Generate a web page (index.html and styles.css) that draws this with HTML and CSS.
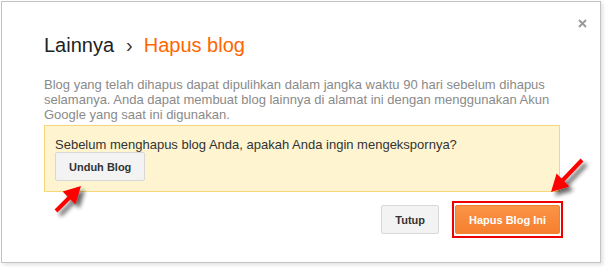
FILE: index.html
```html
<!DOCTYPE html>
<html lang="id">
    <head>
        <meta charset="UTF-8" />
        <meta name="viewport" content="width=device-width, initial-scale=1.0" />
        <title>Hapus blog</title>
        <link rel="stylesheet" href="styles.css">
    </head>
    <body>
        <div class="dialog">
            <button class="close-btn" aria-label="Tutup">
                <svg width="9" height="9" viewBox="0 0 9 9" fill="none" stroke="currentColor" stroke-width="2">
                    <path d="M1 1 8 8"></path>
                    <path d="M8 1 1 8"></path>
                </svg>
            </button>

            <h1 class="dialog-title">
                <span class="crumb">Lainnya</span><span class="sep">›</span><span class="current">Hapus blog</span>
            </h1>

            <p class="dialog-text">
                Blog yang telah dihapus dapat dipulihkan dalam jangka waktu 90 hari sebelum dihapus
                selamanya. Anda dapat membuat blog lainnya di alamat ini dengan menggunakan Akun
                Google yang saat ini digunakan.
            </p>

            <!-- Export notice -->
            <div class="notice">
                <p>Sebelum menghapus blog Anda, apakah Anda ingin mengekspornya?</p>
                <button class="btn">Unduh Blog</button>
            </div>

            <div class="dialog-footer">
                <button class="btn">Tutup</button>
                <span class="highlight">
                    <button class="btn btn-danger">Hapus Blog Ini</button>
                </span>
            </div>
        </div>

        <!-- Annotation arrows -->
        <svg class="annotations" width="605" height="267" viewBox="0 0 605 267">
            <defs>
                <filter id="shadow" x="-20%" y="-20%" width="160%" height="160%">
                    <feGaussianBlur in="SourceAlpha" stdDeviation="2"></feGaussianBlur>
                    <feOffset dx="4" dy="4" result="blur"></feOffset>
                    <feComponentTransfer><feFuncA type="linear" slope="0.6"></feFuncA></feComponentTransfer>
                    <feMerge>
                        <feMergeNode></feMergeNode>
                        <feMergeNode in="SourceGraphic"></feMergeNode>
                    </feMerge>
                </filter>
            </defs>
            <g filter="url(#shadow)" fill="#ff0000" stroke="#ff0000">
                <line x1="56" y1="211" x2="70" y2="197" stroke-width="4"></line>
                <polygon points="81,186 62.6,191.6 75.4,204.4" stroke="none"></polygon>
                <line x1="582" y1="160" x2="562" y2="181" stroke-width="4"></line>
                <polygon points="551,192 556.6,173.6 569.4,186.4" stroke="none"></polygon>
            </g>
        </svg>
    </body>
</html>
```

FILE: styles.css
```css
* {
    margin: 0;
    padding: 0;
    box-sizing: border-box;
    font-family: "Liberation Sans", Arial, sans-serif;
}

body {
    width: 605px;
    height: 267px;
    padding: 1px 0 0 1px;
    background-color: #fff;
    overflow: hidden;
}

.dialog {
    position: relative;
    width: 600px;
    height: 262px;
    padding: 31px 42px 0 42px;
    background-color: #fff;
    border: 1px solid #c4c4c4;
    box-shadow: 2px 2px 4px rgba(0, 0, 0, 0.12);
}

/* Close button */
.close-btn {
    position: absolute;
    top: 16px;
    right: 12px;
    padding: 1px;
    border: none;
    background: none;
    color: #9a9a9a;
    display: flex;
}

.dialog-title {
    font-size: 20px;
    line-height: 24px;
    font-weight: 400;
    color: #222;
    display: flex;
}

.dialog-title .sep {
    margin: 0 11px 0 12px;
    color: #333;
}

.dialog-title .current {
    color: #ff6600;
}

.dialog-text {
    width: 516px;
    margin-top: 20px;
    font-size: 13px;
    line-height: 15px;
    color: #8a8a8a;
}

/* Export notice */
.notice {
    width: 516px;
    margin-top: 3px;
    padding: 11px 10px 10px;
    background-color: #fef5d0;
    border: 1px solid #f9d679;
}

.notice p {
    font-size: 13px;
    line-height: 15px;
    color: #333;
}

.btn {
    height: 29px;
    padding: 0 13px;
    font-size: 11px;
    font-weight: 700;
    color: #333;
    background-color: #f3f3f3;
    border: 1px solid #d8d8d8;
    border-radius: 2px;
    cursor: pointer;
}

.dialog-footer {
    width: 516px;
    margin-top: 9px;
    display: flex;
    justify-content: flex-end;
    align-items: center;
    gap: 13px;
}

.highlight {
    display: flex;
    margin-right: -3px;
    padding: 2px 1px;
    border: 2px solid #ee0000;
}

.btn-danger {
    color: #fff;
    background: linear-gradient(#fb9447, #f67f2f);
    border-color: #f08130;
}

/* Annotation layer */
.annotations {
    position: absolute;
    top: 0;
    left: 0;
    pointer-events: none;
}
```
